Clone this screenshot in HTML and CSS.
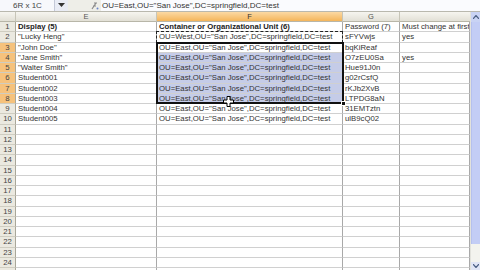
FILE: index.html
```html
<!DOCTYPE html>
<html>
<head>
<meta charset="utf-8">
<link rel="stylesheet" href="styles.css">
</head>
<body>
<div class="app">
  <div class="fbar">
    <div class="namebox">6R x 1C</div>
    <div class="nbdrop"><svg width="7" height="5" viewBox="0 0 7 5"><path d="M0 0h7L3.5 4z" fill="#333"/></svg></div>
    <div class="fxzone"><svg width="8" height="8" viewBox="0 0 8 8"><path d="M1 7L5 1M3 1h3M2 4h3" stroke="#8a8a8a" stroke-width="1.2" fill="none"/><circle cx="6.5" cy="6.5" r="1" fill="#6b86c8"/></svg></div>
    <div class="formula">OU=East,OU="San Jose",DC=springfield,DC=test</div>
  </div>
  <div class="main">
    <div class="sheet">
      <div class="grid">
        <div class="corner"></div>
        <div class="ch">E</div>
        <div class="ch sel">F</div>
        <div class="ch">G</div>
        <div class="ch last"></div>

        <div class="rh">1</div><div class="c b">Display (5)</div><div class="c b">Container or Organizational Unit (6)</div><div class="c">Password (7)</div><div class="c">Must change at first logon</div>
        <div class="rh">2</div><div class="c">"Lucky Heng"</div><div class="c">OU=West,OU="San Jose",DC=springfield,DC=test</div><div class="c">sFYVwjs</div><div class="c">yes</div>
        <div class="rh sel">3</div><div class="c">"John Doe"</div><div class="c">OU=East,OU="San Jose",DC=springfield,DC=test</div><div class="c">bqKiReaf</div><div class="c"></div>
        <div class="rh sel">4</div><div class="c">"Jane Smith"</div><div class="c hl">OU=East,OU="San Jose",DC=springfield,DC=test</div><div class="c">O7zEU0Sa</div><div class="c">yes</div>
        <div class="rh sel">5</div><div class="c">"Walter Smith"</div><div class="c hl">OU=East,OU="San Jose",DC=springfield,DC=test</div><div class="c">Hue91J0n</div><div class="c"></div>
        <div class="rh sel">6</div><div class="c">Student001</div><div class="c hl">OU=East,OU="San Jose",DC=springfield,DC=test</div><div class="c">g02rCsfQ</div><div class="c"></div>
        <div class="rh sel">7</div><div class="c">Student002</div><div class="c hl">OU=East,OU="San Jose",DC=springfield,DC=test</div><div class="c">rKJb2XvB</div><div class="c"></div>
        <div class="rh sel">8</div><div class="c">Student003</div><div class="c hl">OU=East,OU="San Jose",DC=springfield,DC=test</div><div class="c">LTPDG8aN</div><div class="c"></div>
        <div class="rh">9</div><div class="c">Student004</div><div class="c">OU=East,OU="San Jose",DC=springfield,DC=test</div><div class="c">31EMTztn</div><div class="c"></div>
        <div class="rh">10</div><div class="c">Student005</div><div class="c">OU=East,OU="San Jose",DC=springfield,DC=test</div><div class="c">ulB9cQ02</div><div class="c"></div>
        <div class="rh">11</div><div class="c"></div><div class="c"></div><div class="c"></div><div class="c"></div>
        <div class="rh">12</div><div class="c"></div><div class="c"></div><div class="c"></div><div class="c"></div>
        <div class="rh">13</div><div class="c"></div><div class="c"></div><div class="c"></div><div class="c"></div>
        <div class="rh">14</div><div class="c"></div><div class="c"></div><div class="c"></div><div class="c"></div>
        <div class="rh">15</div><div class="c"></div><div class="c"></div><div class="c"></div><div class="c"></div>
        <div class="rh">16</div><div class="c"></div><div class="c"></div><div class="c"></div><div class="c"></div>
        <div class="rh">17</div><div class="c"></div><div class="c"></div><div class="c"></div><div class="c"></div>
        <div class="rh">18</div><div class="c"></div><div class="c"></div><div class="c"></div><div class="c"></div>
        <div class="rh">19</div><div class="c"></div><div class="c"></div><div class="c"></div><div class="c"></div>
        <div class="rh">20</div><div class="c"></div><div class="c"></div><div class="c"></div><div class="c"></div>
        <div class="rh">21</div><div class="c"></div><div class="c"></div><div class="c"></div><div class="c"></div>
        <div class="rh">22</div><div class="c"></div><div class="c"></div><div class="c"></div><div class="c"></div>
        <div class="rh">23</div><div class="c"></div><div class="c"></div><div class="c"></div><div class="c"></div>
        <div class="rh">24</div><div class="c"></div><div class="c"></div><div class="c"></div><div class="c"></div>
        <div class="rh">25</div><div class="c"></div><div class="c"></div><div class="c"></div><div class="c"></div>
      </div>
      <div class="grid overlay">
        <div class="copyrange"></div>
        <div class="selrange"><span class="handle"></span><svg class="cursor" width="11" height="11" viewBox="0 0 11 11"><path d="M4 0.5h3v3.5h3.5v3h-3.5v3.5h-3v-3.5h-3.5v-3h3.5z" fill="#fff" stroke="#000" stroke-width="1"/></svg></div>
      </div>
    </div>
    <div class="vscroll">
      <div class="sbtn"><svg width="6" height="4" viewBox="0 0 6 4"><path d="M0 4L3 0.5L6 4" stroke="#4d6185" stroke-width="1.2" fill="none"/></svg></div>
      <div class="thumb"></div>
      <div class="track"></div>
      <div class="sbtn bottom"><svg width="6" height="4" viewBox="0 0 6 4"><path d="M0 0L3 3.5L6 0" stroke="#4d6185" stroke-width="1.2" fill="none"/></svg></div>
    </div>
  </div>
</div>
</body>
</html>
```
FILE: styles.css
```css
* { box-sizing: border-box; }
html, body { margin: 0; padding: 0; }
body {
  width: 480px;
  height: 270px;
  overflow: hidden;
  background: #fff;
  font-family: "Liberation Sans", Arial, sans-serif;
  color: #222;
}
.app {
  display: flex;
  flex-direction: column;
  height: 270px;
}
.fbar {
  display: flex;
  height: 12px;
  background: #eeeee8;
  border-bottom: 1px solid #b9b8ae;
  flex: none;
}
.namebox {
  width: 55px;
  background: #f7f8fc;
  border-right: 1px solid #c4c9d8;
  font-size: 8px;
  line-height: 11px;
  padding-left: 13px;
  color: #444;
}
.nbdrop {
  width: 13px;
  display: flex;
  align-items: center;
  justify-content: center;
  background: #e9ecf5;
}
.fxzone {
  width: 33px;
  display: flex;
  align-items: center;
  justify-content: flex-end;
  padding-right: 2px;
}
.formula {
  flex: 1;
  background: #fafbfe;
  font-size: 8px;
  line-height: 11px;
  padding-left: 1px;
  white-space: nowrap;
  color: #333;
}
.main {
  display: flex;
  flex: 1;
  min-height: 0;
}
.sheet {
  flex: 1;
  overflow: hidden;
  position: relative;
}
.grid {
  display: grid;
  grid-template-columns: 16px 141px 186px 57px 70px;
  grid-template-rows: 10px;
  grid-auto-rows: 10.25px;
}
.overlay {
  position: absolute;
  inset: 0;
  grid-template-rows: 10px repeat(24, 10.25px);
  pointer-events: none;
}
.corner, .ch {
  background: linear-gradient(#f6f5f0, #e2e0d6);
  border-right: 1px solid #c7c5b8;
  border-bottom: 1px solid #b8b6a8;
}
.ch {
  font-size: 7.5px;
  line-height: 9px;
  text-align: center;
  color: #555;
}
.ch.sel {
  background: linear-gradient(#fbd9a4, #f4b55a);
  color: #333;
}
.ch.last { border-right: none; }
.rh {
  background: #ebe9e0;
  border-right: 1px solid #a9a79a;
  border-bottom: 1px solid #cfcdc1;
  font-size: 7.8px;
  line-height: 9.25px;
  text-align: center;
  color: #444;
}
.rh.sel {
  background: #f6c27c;
  color: #444;
}
.c {
  border-right: 1px solid #a9a9a9;
  border-bottom: 1px solid #d0d0d0;
  font-size: 7.75px;
  line-height: 9.25px;
  padding-left: 2px;
  white-space: nowrap;
  overflow: hidden;
  color: #333;
}
.c.b { font-weight: bold; color: #222; }
.c.hl { background: #c5cce8; }
.copyrange {
  grid-column: 3;
  grid-row: 3 / 4;
  margin: -1px 0 0 -1px;
  border: 1px dashed #222;
}
.selrange {
  grid-column: 3;
  grid-row: 4 / 10;
  margin: -1px -1px 0 -1px;
  border: 2px solid #111;
  position: relative;
}
.handle {
  position: absolute;
  right: -4px;
  bottom: -4px;
  width: 5px;
  height: 5px;
  background: #111;
  border: 1px solid #fff;
}
.cursor {
  position: absolute;
  left: 65px;
  bottom: -5px;
}
.vscroll {
  width: 10px;
  flex: none;
  display: flex;
  flex-direction: column;
  background: #f3f3ee;
  border-left: 1px solid #e2e2dc;
}
.sbtn {
  height: 10px;
  display: flex;
  align-items: center;
  justify-content: center;
  background: #c9d3f4;
  flex: none;
}
.sbtn.bottom {
  background: #e0e5f5;
  height: 8px;
}
.thumb {
  height: 222px;
  flex: none;
  background: #c3cdf5;
  border-left: 1px solid #b5c1ee;
}
.track { flex: 1; }
```
